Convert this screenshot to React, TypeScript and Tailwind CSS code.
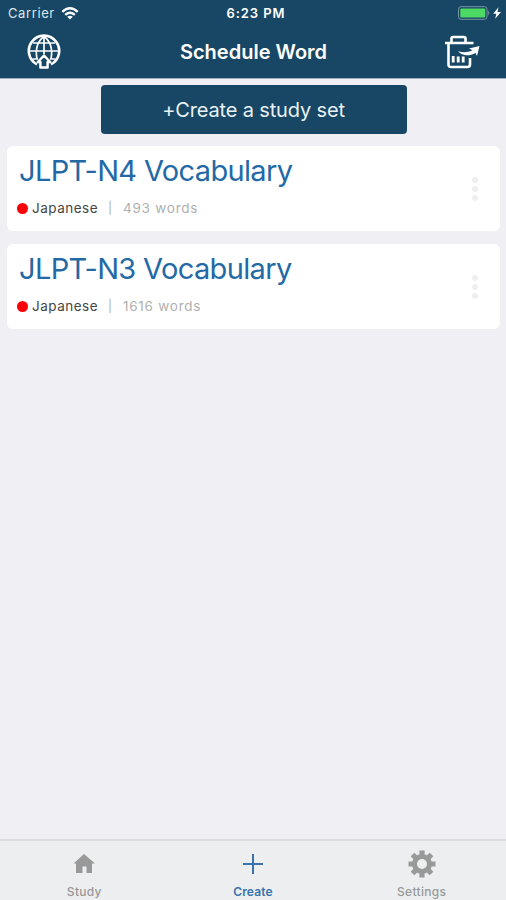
import React from "react";

function GlobeUploadIcon() {
  return (
    <svg width="34" height="36" viewBox="0 0 34 36" fill="none" stroke="#fff" strokeWidth="1.6">
      <path d="M10 30.3A15.2 15.2 0 1 1 24 30.3" strokeWidth="2.6" />
      <path d="M17 2v18M2 17h30M6 9h22M10 25C8.500 17 9.500 8 17 2.500C24.500 8 25.500 17 24 25M5.500 25h5.500M23 25h5.500" strokeWidth="1.700" />
      <path d="M17 21.500L23.200 28H20.600V33.600H13.400V28H10.800Z" strokeWidth="2.500" fill="#174764" strokeLinejoin="round" />
    </svg>
  );
}

function TrashRestoreIcon() {
  return (
    <svg width="37" height="36" viewBox="0 0 37 36" fill="none" stroke="#fff" strokeWidth="2.600">
      <path d="M1 9H29.500M7.500 8V4.500Q7.500 3 9 3H20Q21.500 3 21.500 4.500V8M4.500 9V30.500Q4.500 33 7 33H23.500Q26 33 26 30.500V24" />
      <path d="M9.200 22v6.500M14.200 22.500v6M19.200 22.500v6" strokeWidth="2.800" />
      <path d="M14 17.300C18 22 25 22.500 31.500 19L33 22L35.500 12L25 14.500L28.500 16.200C23.500 18.500 19.500 18.700 14 17.300Z" fill="#fff" stroke="none" />
    </svg>
  );
}

function WifiIcon() {
  return (
    <svg width="18" height="13" viewBox="0 0 18 13" fill="none" stroke="#fff" strokeWidth="2.300">
      <path d="M1.300 4.800Q9-2.200 16.700 4.800M4.200 7.900Q9 3.700 13.800 7.900" />
      <path d="M6.200 9.700Q9 7.700 11.800 9.700L9 12.600Z" fill="#fff" stroke="none" />
    </svg>
  );
}

function BatteryIcon() {
  return (
    <svg width="44" height="14" viewBox="0 0 44 14" fill="none">
      <rect x="0.500" y="0.700" width="28.500" height="12.600" rx="2.500" stroke="#7796a5" />
      <rect x="2.300" y="2.400" width="25" height="9.200" rx="1" fill="#4cd964" />
      <path d="M30.200 4.500Q32.300 7 30.200 9.500Z" fill="#7796a5" />
      <path d="M40.500 1.300L35.200 7.700H38.300L37.200 12.800L43 6.100H39.500Z" fill="#fff" />
    </svg>
  );
}

function StudySet({ title, count }: { title: string; count: string }) {
  return (
    <article className="flex h-[85px] items-center justify-between rounded-md bg-white pl-[11px] pr-[22px]">
      <div className="flex h-full flex-col pt-1.5">
        <h2 className="ml-px whitespace-nowrap text-[29px] leading-[38px] font-normal tracking-[-0.65px] text-[#2369a5]">{title}</h2>
        <div className="mt-2 -ml-px flex items-center text-[13.5px] leading-5 whitespace-nowrap">
          <span className="size-[11px] shrink-0 rounded-full bg-[#fb0007]" />
          <span className="ml-1 w-[76px] tracking-[0.5px] text-[#454545]">Japanese</span>
          <span className="w-[15px] text-[12px] text-[#b0b0b0]">|</span>
          <span className="tracking-[0.75px] text-[#b0b0b0]">{count}</span>
        </div>
      </div>
      <div className="flex flex-col gap-[3px]">
        <i className="size-1.5 rounded-full bg-[#efefef]" />
        <i className="size-1.5 rounded-full bg-[#efefef]" />
        <i className="size-1.5 rounded-full bg-[#efefef]" />
      </div>
    </article>
  );
}

export default function App() {
  return (
    <div className="flex h-[900px] w-[506px] flex-col overflow-hidden bg-[#efeff4] font-['Inter','Liberation_Sans',sans-serif]">
      <header className="h-[79px] shrink-0 border-b border-[#9eafbe] bg-[#174764] text-white">
        <div className="grid h-[26px] grid-cols-3 items-center pl-2 pr-1 text-[13px] leading-[26px]">
          <div className="flex items-center gap-1.5 text-[#dce5e9]"><span className="w-[47px] tracking-[0.6px]">Carrier</span><WifiIcon /></div>
          <span className="pl-0.5 text-center font-semibold tracking-[0.9px]">6:23 PM</span>
          <div className="flex justify-end"><BatteryIcon /></div>
        </div>
        <div className="flex h-[52px] items-center justify-between pl-[27px] pr-[25px]">
          <GlobeUploadIcon />
          <h1 className="pl-0.5 text-[20px] font-semibold">Schedule Word</h1>
          <TrashRestoreIcon />
        </div>
      </header>
      <main className="flex-1 px-1.5 pt-1.5 pl-[7px]">
        <button className="mx-auto block h-[49px] w-[306px] rounded-[4px] bg-[#174764] pt-px text-[20px] tracking-[-0.15px] text-[#e9f1f5]">+Create a study set</button>
        <div className="mt-3 flex flex-col gap-[13px]">
          <StudySet title="JLPT-N4 Vocabulary" count="493 words" />
          <StudySet title="JLPT-N3 Vocabulary" count="1616 words" />
        </div>
      </main>
      <nav className="grid h-[61px] shrink-0 grid-cols-3 border-t-2 border-[#dcdce1] bg-[#eceeef] text-[12px] font-medium text-[#999]">
        <div className="flex flex-col items-center pt-[9px]">
          <svg width="28" height="28" viewBox="0 0 28 28"><path d="M14 4L25 13.500H22V23H16.500V16.500H12.500V23H6V13.500H3.500Z" fill="#999" /></svg>
          <span className="mt-1.5 leading-4 tracking-[0.3px]">Study</span>
        </div>
        <div className="flex flex-col items-center pt-[9px] text-[#3973ad]">
          <svg width="28" height="28" viewBox="0 0 28 28"><path d="M14 4V24M4 14H24" stroke="#3973ad" strokeWidth="2" /></svg>
          <span className="mt-1.5 leading-4 font-semibold tracking-[0.15px]">Create</span>
        </div>
        <div className="flex flex-col items-center pt-[9px]">
          <svg width="28" height="28" viewBox="0 0 28 28">
            <circle cx="14" cy="14" r="7.500" fill="none" stroke="#999" strokeWidth="5" />
            <path d="M14 0.500V5M14 23V27.500M0.500 14H5M23 14H27.500M4.500 4.500L7.600 7.600M20.400 20.400L23.500 23.500M23.500 4.500L20.400 7.600M7.600 20.400L4.500 23.500" stroke="#999" strokeWidth="5.200" />
          </svg>
          <span className="mt-1.5 leading-4 tracking-[0.3px]">Settings</span>
        </div>
      </nav>
    </div>
  );
}
